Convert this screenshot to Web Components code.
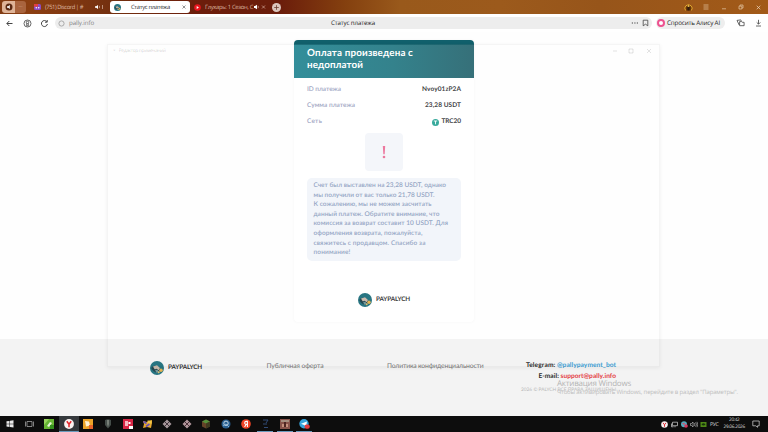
<!DOCTYPE html>
<html lang="ru">
<head>
<meta charset="utf-8">
<title>Статус платежа</title>
<style>
  html, body { margin: 0; height: 100%; overflow: hidden; }
  body { font-family: "Open Sans", "Noto Sans", sans-serif; background: #fff; text-rendering: geometricPrecision; }
</style>
</head>
<body>
<desktop-screen></desktop-screen>

<script>
class DesktopScreen extends HTMLElement {
  connectedCallback () {
    this.attachShadow({ mode: 'open' }).innerHTML =
    /* html */`
    <style>
      :host { display: flex; flex-direction: column; width: 768px; height: 432px; position: relative; overflow: hidden; }
      main { flex: 1; min-height: 0; display: flex; flex-direction: column; align-items: center; background: #fefefe; }
      payment-card { margin-top: 8px; }
      page-footer { margin-top: auto; align-self: stretch; }
      ghost-window { position: absolute; left: 107px; top: 44px; }
      activation-note { position: absolute; left: 557px; top: 377px; }
    </style>
    <tab-strip></tab-strip>
    <address-bar></address-bar>
    <main>
      <payment-card>
        <span slot="title"><fit-text w="106">Оплата произведена с</fit-text><br><fit-text w="56">недоплатой</fit-text></span>
        <payment-row><fit-text slot="label" w="34">ID платежа</fit-text><fit-text w="39">Nvoy01zP2A</fit-text></payment-row>
        <payment-row><fit-text slot="label" w="48">Сумма платежа</fit-text><fit-text w="36">23,28 USDT</fit-text></payment-row>
        <payment-row coin><fit-text slot="label" w="15">Сеть</fit-text><fit-text w="19.5">TRC20</fit-text></payment-row>
      </payment-card>
      <page-footer></page-footer>
    </main>
    <task-bar></task-bar>
    <ghost-window></ghost-window>
    <activation-note></activation-note>
    `
  }
}

class TabStrip extends HTMLElement {
  connectedCallback () {
    this.attachShadow({ mode: 'open' }).innerHTML =
    /* html */`
    <style>
      :host { display: flex; align-items: center; box-sizing: border-box; height: 14px; padding-left: 2px; color: #dfb9a2; font-size: 5.8px; line-height: 12px;
        background: linear-gradient(90deg, #803a12 0, #8c3f12 30px, #74300f 110px, #6c1d0b 200px, #6b1d0b 280px, #84400f 345px, #99591b 400px, #9c5a1c 500px, #97551a 600px, #a25a18 768px); }
      .pin { display: flex; align-items: center; justify-content: center; width: 13px; height: 12px; border-radius: 3px 0 0 3px; background: #dfb498; }
      .more { width: 11px; height: 12px; border-radius: 0 3px 3px 0; background: #a9643e; text-align: center; font-size: 5px; }
      .tab { display: flex; align-items: center; height: 12px; }
      .one { width: 74px; margin-left: 8px; }
      .two { box-sizing: border-box; width: 80px; margin-left: 2px; padding: 0 4px; background: #fff; border-radius: 3px; color: #222; }
      .three { width: 77px; margin-left: 4px; }
      .plus { width: 9px; height: 9px; border-radius: 50%; background: #dcc6bd; margin-left: 1px; }
      svg { display: block; flex: none; }
      .controls { display: flex; align-items: center; margin-left: auto; padding-right: 7px; }
    </style>
    <div class="pin"><svg width="8" height="8" viewBox="0 0 8 8"><circle cx="4" cy="4" r="3.5" fill="#5b2a13"/><path d="M2 3.2h1.2L4.8 2v4L3.2 4.8H2z" fill="#fff"/></svg></div>
    <div class="more">···</div>
    <div class="tab one">
      <svg width="7" height="8" viewBox="0 0 7 8"><rect y="1" width="7" height="6" rx="1.5" fill="#8a4cc4"/><path d="M0 1h4v2.6H0z" fill="#e3403f"/><circle cx="2.3" cy="4.7" r=".8" fill="#fff"/><circle cx="4.7" cy="4.7" r=".8" fill="#fff"/></svg>
      <fit-text w="38" style="margin-left:4px">(751) Discord | #</fit-text>
      <svg style="margin-left:12px" width="11" height="6" viewBox="0 0 11 6"><path d="M0 2.2h1.2L3 1v4L1.2 3.8H0z" fill="#fff"/><path d="M4.2 1.8q.8 1.2 0 2.4M7.5 1v4" stroke="#e9cdbd" stroke-width=".6" fill="none"/></svg>
    </div>
    <div class="tab two">
      <pally-logo style="--size:7px"></pally-logo>
      <fit-text w="39" style="margin-left:10px">Статус платежа</fit-text>
      <svg style="margin-left:auto" width="4" height="4" viewBox="0 0 4 4"><path d="M.5.5l3 3m0-3l-3 3" stroke="#666" stroke-width=".7"/></svg>
    </div>
    <div class="tab three">
      <svg width="7" height="7" viewBox="0 0 7 7"><circle cx="3.5" cy="3.5" r="3.3" fill="#e8141d"/><path d="M2.7 2l2.2 1.5L2.7 5z" fill="#fff"/></svg>
      <fit-text w="48" style="margin-left:4px">Глухарь: 1 Сезон, С</fit-text>
      <svg style="margin-left:1px" width="14" height="6" viewBox="0 0 14 6"><path d="M0 2h1L3 .8v4.4L1 4H0z" fill="#fff"/><path d="M4 1.8q.8 1.2 0 2.4M8 1.5l3 3m0-3l-3 3" stroke="#e6c1b4" stroke-width=".6" fill="none"/></svg>
    </div>
    <div class="plus"><svg width="9" height="9" viewBox="0 0 9 9"><path d="M4.5 2.2v4.6M2.2 4.5h4.6" stroke="#6b3d2e" stroke-width=".8"/></svg></div>
    <div class="controls">
      <svg width="9" height="10" viewBox="0 0 9 10"><path d="M1.6 8.5A3.6 3.6 0 1 1 7.4 8.5" fill="#6a3506" stroke="#e7ad33" stroke-width="1"/><path d="M3.4 3.3h2.2v5.2H3.4z" fill="#311b0d"/><circle cx="4.5" cy="4" r="1.1" fill="#f1bd45"/></svg>
      <svg style="margin-left:10px" width="6" height="6" viewBox="0 0 6 6"><path d="M.5 1h5M.5 3h5M.5 5h5" stroke="#e5c8a6" stroke-width=".7"/></svg>
      <svg style="margin-left:12px" width="6" height="6" viewBox="0 0 6 6"><path d="M1 4.8h4" stroke="#e5c8a6" stroke-width=".7"/></svg>
      <svg style="margin-left:11px" width="6" height="6" viewBox="0 0 6 6"><path d="M1 2.2h2.8V5H1zM2 2V1h3v3H4" stroke="#e5c8a6" stroke-width=".7" fill="none"/></svg>
      <svg style="margin-left:12px" width="5" height="5" viewBox="0 0 5 5"><path d="M.7.7l3.6 3.6m0-3.6L.7 4.3" stroke="#f0d9bf" stroke-width=".7"/></svg>
    </div>
    `
  }
}

class AddressBar extends HTMLElement {
  connectedCallback () {
    this.attachShadow({ mode: 'open' }).innerHTML =
    /* html */`
    <style>
      :host { display: flex; align-items: center; box-sizing: border-box; height: 18px; padding: 0 5px 0 5px; background: #fff; color: #222; font-size: 6.2px; line-height: 12px; }
      svg { display: block; flex: none; fill: none; stroke: #444; stroke-width: .8; }
      .field { display: flex; align-items: center; box-sizing: border-box; width: 597px; height: 12px; margin-left: 5px; padding: 0 3px; border-radius: 6px; background: #ededed; }
      .url { color: #858585; margin-left: 4px; }
      .alice { display: flex; align-items: center; box-sizing: border-box; width: 69px; height: 12px; margin-left: 4px; padding-left: 1px; background: #eee; border-radius: 6px; font-size: 6.3px; font-weight: 500; }
      .ring { box-sizing: border-box; width: 8px; height: 8px; border: 2.2px solid #ed5290; border-radius: 50%; background: #fff; margin-right: 2px; }
    </style>
    <svg width="9" height="9" viewBox="0 0 9 9"><path d="M7.5 4.5H2M4.3 2L1.8 4.5 4.3 7" stroke-width="1"/></svg>
    <svg style="margin-left:9px" width="9" height="9" viewBox="0 0 9 9"><circle cx="4.5" cy="4.5" r="3.5"/><circle cx="4.5" cy="3.4" r="1.2"/><path d="M3.7 4.3v2.5h1.6V4.3" /></svg>
    <svg style="margin-left:8px" width="9" height="9" viewBox="0 0 9 9"><path d="M6.8 2.7A3 3 0 1 0 7.4 5M7.2 1v2.2H5" stroke-width="1"/></svg>
    <div class="field" style="margin-left:6px">
      <svg width="7" height="7" viewBox="0 0 7 7" style="stroke:#aaa"><circle cx="3.5" cy="3.5" r="2.6" stroke-width="1"/></svg>
      <fit-text class="url" w="25">pally.info</fit-text>
      <fit-text w="44" style="margin-left:237px">Статус платежа</fit-text>
      <svg style="margin-left:auto" width="8" height="8" viewBox="0 0 8 8"><path d="M.8 4h1.2m1.3 0h1.2m1.3 0H7" stroke-width="1"/></svg>
      <svg style="margin:0 0 0 3px" width="7" height="8" viewBox="0 0 7 8"><path d="M1.2 1.2h4.6v5.6L3.5 5.2 1.2 6.8z"/></svg>
    </div>
    <div class="alice"><div class="ring"></div><fit-text w="53">Спросить Алису AI</fit-text></div>
    <svg style="margin-left:auto" width="9" height="8" viewBox="0 0 9 8"><path d="M3.2 6L1 1.4l3.8-.5 .5 1M3.6 2.6h2.2l.5.7h1.8v3.4H3.6z"/></svg>
    <svg style="margin-left:10px; margin-right:1px" width="7" height="8" viewBox="0 0 7 8"><path d="M3.5 .8v4.2M1.7 3.4l1.8 1.8 1.8-1.8M1 7h5"/></svg>
    `
  }
}

class PaymentCard extends HTMLElement {
  connectedCallback () {
    this.attachShadow({ mode: 'open' }).innerHTML =
    /* html */`
    <style>
      :host { display: block; box-sizing: border-box; width: 180px; height: 282px; background: #fff; border-radius: 4px; box-shadow: 0 0 3px rgba(0,0,0,.045); }
      header { box-sizing: border-box; height: 38px; padding: 6.5px 13px 0; border-radius: 4px 4px 0 0; color: #fff; font: 700 9.8px/12.7px Lato, "Open Sans", sans-serif;
        background: linear-gradient(#11606c, #11606c) top/100% 4.6px no-repeat, linear-gradient(90deg, #338e9a, #34828c 55%, #367079); }
      .rows { padding: 4px 13px 0; }
      .mark { display: flex; align-items: center; justify-content: center; width: 38px; height: 38px; margin: 3px auto 7px; background: #f4f6fa; border-radius: 4px; }
      .notice { box-sizing: border-box; width: 154px; height: 83px; margin: 0 auto; padding: 3px 6.5px; border-radius: 5px; background: #f2f5fa; color: #94a5c4; font: 600 6.5px/9.6px Lato, "Open Sans", sans-serif; }
      .notice fit-text { display: block; }
      .brand { display: flex; align-items: center; justify-content: center; margin-top: 32px; color: #3c3c3c; font: 700 6.3px/14px Lato, sans-serif; gap: 4px; }
    </style>
    <header><slot name="title"></slot></header>
    <div class="rows"><slot></slot></div>
    <div class="mark"><svg width="6" height="14" viewBox="0 0 6 14"><path d="M1.8 1h2.4L3.7 9.3H2.3z" fill="#ec799f"/><circle cx="3" cy="12" r="1.3" fill="#ec799f"/></svg></div>
    <div class="notice">
      <fit-text w="132.5">Счет был выставлен на 23,28 USDT, однако</fit-text>
      <fit-text w="121">мы получили от вас только 21,78 USDT.</fit-text>
      <fit-text w="118">К сожалению, мы не можем засчитать</fit-text>
      <fit-text w="126">данный платеж. Обратите внимание, что</fit-text>
      <fit-text w="134.5">комиссия за возврат составит 10 USDT. Для</fit-text>
      <fit-text w="109">оформления возврата, пожалуйста,</fit-text>
      <fit-text w="112">свяжитесь с продавцом. Спасибо за</fit-text>
      <fit-text w="37">понимание!</fit-text>
    </div>
    <div class="brand"><pally-logo></pally-logo><fit-text w="34">PAYPALYCH</fit-text></div>
    `
  }
}

class PaymentRow extends HTMLElement {
  connectedCallback () {
    const coin = this.hasAttribute('coin')
      ? '<svg width="7" height="7" viewBox="0 0 7 7"><circle cx="3.5" cy="3.5" r="3.5" fill="#38aa9c"/><path d="M1.8 2h3.4M3.5 2v3.3" stroke="#fff" stroke-width=".9"/></svg>'
      : ''
    this.attachShadow({ mode: 'open' }).innerHTML =
    /* html */`
    <style>
      :host { display: flex; align-items: center; justify-content: space-between; height: 16px; font: 600 6.5px/15.5px Lato, "Open Sans", sans-serif; }
      .label { color: #a0a6c3; }
      .value { display: flex; align-items: center; gap: 2.5px; color: #454548; font-weight: 700; }
    </style>
    <span class="label"><slot name="label"></slot></span>
    <span class="value">${coin}<slot></slot></span>
    `
  }
}

class PallyLogo extends HTMLElement {
  connectedCallback () {
    this.attachShadow({ mode: 'open' }).innerHTML =
    /* html */`
    <style>
      :host { display: block; flex: none; width: var(--size, 14px); height: var(--size, 14px); }
      svg { display: block; width: 100%; height: 100%; }
    </style>
    <svg viewBox="0 0 14 14">
      <circle cx="7" cy="7" r="7" fill="#287582"/>
      <path d="M1.2 7q2-3 6-2.2l3.3 3.8-2.8 3.5Q3 11 1.2 7z" fill="#254750"/>
      <path d="M3 5.6l4-1.3 3 2.7-1.4 2.2-2-1.5-2 .5z" fill="#ccbcae"/>
      <path d="M5 8.7l2.7.4.9 2.2-2.3.5z" fill="#70979b"/>
      <circle cx="11" cy="9.3" r="1.7" fill="#e5b452"/>
      <circle cx="8.7" cy="11.2" r="1" fill="#d9c173"/>
    </svg>
    `
  }
}

class PageFooter extends HTMLElement {
  connectedCallback () {
    this.attachShadow({ mode: 'open' }).innerHTML =
    /* html */`
    <style>
      :host { display: flex; align-items: flex-start; box-sizing: border-box; height: 77px; padding: 21px 0 0 150px; background: #f3f3f3; font: 400 6.8px/12px Lato, "Open Sans", sans-serif; color: #777; }
      .brand { display: flex; align-items: center; gap: 4px; margin-top: 1px; color: #333; font: 700 6.3px/14px Lato, sans-serif; }
      .terms { margin-left: 64.5px; }
      .policy { margin-left: 63.5px; }
      .contacts { display: flex; flex-direction: column; align-items: flex-end; width: 132.5px; color: #292929; font: 700 6.6px/11px Lato, "Open Sans", sans-serif; }
      .tg { color: #3b9dd2; }
      .mail { color: #e33c43; }
      .rights { color: #b9b9b9; font: 400 4.8px/9px Lato, sans-serif; margin-top: 4px; }
    </style>
    <div class="brand"><pally-logo></pally-logo><fit-text w="34">PAYPALYCH</fit-text></div>
    <fit-text class="terms" w="57">Публичная оферта</fit-text>
    <fit-text class="policy" w="96.5">Политика конфиденциальности</fit-text>
    <div class="contacts">
      <div><fit-text w="29.5">Telegram:</fit-text> <fit-text class="tg" w="59">@pallypayment_bot</fit-text></div>
      <div><fit-text w="20.5">E-mail:</fit-text> <fit-text class="mail" w="55.5">support@pally.info</fit-text></div>
      <fit-text class="rights" w="95">2026 © PALYCH ВСЕ ПРАВА ЗАЩИЩЕНЫ</fit-text>
    </div>
    `
  }
}

// faded leftover of a window that is opening over the page
class GhostWindow extends HTMLElement {
  connectedCallback () {
    this.attachShadow({ mode: 'open' }).innerHTML =
    /* html */`
    <style>
      :host { display: block; box-sizing: border-box; width: 553px; height: 323px; border: 1px solid rgba(0,0,0,.035); box-shadow: 0 1px 4px rgba(0,0,0,.06); }
      .bar { display: flex; align-items: center; height: 12px; padding: 0 6px 0 5px; color: rgba(0,0,0,.2); font-size: 4.8px; line-height: 12px; }
      svg { display: block; margin-left: auto; }
    </style>
    <div class="bar">
      <span>×</span><fit-text w="47" style="margin-left:3px">Редактор примечаний</fit-text>
      <svg width="41" height="6" viewBox="0 0 41 6"><path d="M1 3h4M17 1h4v4h-4zM35 1l4 4m0-4l-4 4" stroke="#000" stroke-opacity=".16" stroke-width=".7" fill="none"/></svg>
    </div>
    `
  }
}

class ActivationNote extends HTMLElement {
  connectedCallback () {
    this.attachShadow({ mode: 'open' }).innerHTML =
    /* html */`
    <style>
      :host { display: flex; flex-direction: column; color: #b4b4b4; font: 400 8px/13px "Open Sans", sans-serif; }
      .small { color: #bdbdbd; font-size: 6px; line-height: 5px; }
    </style>
    <div><fit-text w="74">Активация Windows</fit-text></div>
    <div class="small"><fit-text w="181">Чтобы активировать Windows, перейдите в раздел "Параметры".</fit-text></div>
    `
  }
}

class TaskBar extends HTMLElement {
  connectedCallback () {
    this.attachShadow({ mode: 'open' }).innerHTML =
    /* html */`
    <style>
      :host { display: flex; align-items: center; height: 16px; background: #0d0d0d; color: #ddd; }
      .apps { display: flex; }
      .apps div { display: flex; align-items: center; justify-content: center; box-sizing: border-box; width: 19.65px; height: 16px; }
      .apps .open { background: linear-gradient(#6a9bbd, #6a9bbd) bottom/16px 1px no-repeat; }
      .apps .active { background-color: #35393c; background-size: 100% 1px; }
      svg { display: block; flex: none; }
      .tray { display: flex; align-items: center; margin-left: auto; padding-right: 8px; font-size: 5.2px; }
      .clock { display: flex; flex-direction: column; align-items: center; margin-left: 5px; font-size: 4.7px; line-height: 7px; }
    </style>
    <div class="apps">
      <div><svg width="8" height="8" viewBox="0 0 8 8"><path d="M.5 1.3l3-.4v2.8h-3zM4 .8L7.5.3v3.4H4zM.5 4.2h3V7l-3-.4zM4 4.2h3.5v3.4L4 7.1z" fill="#e8e8e8"/></svg></div>
      <div><svg width="9" height="8" viewBox="0 0 9 8"><path d="M2 1.5h5v5H2zM.5 1.5v5M8.5 1.5v5" stroke="#b5b5b5" stroke-width=".7" fill="none"/></svg></div>
      <div><svg width="10" height="10" viewBox="0 0 10 10"><rect width="10" height="10" fill="#66b534"/><path d="M0 0h5L0 6z" fill="#9ad45d"/><path d="M3 7l3-4 2 1-3 4z" fill="#e7f5d7"/><path d="M6 6h4v4H6z" fill="#35911e"/></svg></div>
      <div class="open active"><svg width="10" height="10" viewBox="0 0 10 10"><circle cx="5" cy="5" r="4.9" fill="#fbf3f2"/><path d="M2.8 2.2L5 5.2l2.2-3M5 5v3.2" stroke="#e2262b" stroke-width="1.5" fill="none"/></svg></div>
      <div><svg width="10" height="10" viewBox="0 0 10 10"><rect width="10" height="10" fill="#eca328"/><path d="M2 2l4 .5 1 4-4 1z" fill="#fff1d0"/><path d="M6 6h4v4H6z" fill="#e66329"/></svg></div>
      <div><svg width="8" height="10" viewBox="0 0 8 10"><path d="M1 1q3-1.5 6 0v5L4 9.5 1 6z" fill="#454d49"/><path d="M3 1v4l1 3 1-3V1z" fill="#788078"/></svg></div>
      <div><svg width="10" height="10" viewBox="0 0 10 10"><rect width="10" height="10" fill="#d72645"/><path d="M2 2h3v5H2z" fill="#f6b7c0"/><path d="M5.5 3h2v2h-2zM6 7h4v3H6z" fill="#fff"/></svg></div>
      <div><svg width="11" height="10" viewBox="0 0 11 10"><path d="M1 2l4 1 5-2v3L9 9 5 8 1 9l1-4z" fill="#e6a82e"/><path d="M5.5 1.5h4v3h-4z" fill="#f0c648"/><path d="M1.5 2.5l3 2M7.5 5L4 7.5" stroke="#6b52b5" stroke-width="1.7"/></svg></div>
      <div><svg width="10" height="10" viewBox="0 0 10 10"><path d="M5 .5L9.5 5 5 9.5.5 5z" fill="#a6979b"/><path d="M3 3l4 4m0-4L3 7" stroke="#382b32" stroke-width=".9"/></svg></div>
      <div><svg width="10" height="10" viewBox="0 0 10 10"><path d="M5 .5L9.5 5 5 9.5.5 5z" fill="#b1979c"/><path d="M3 3l4 4m0-4L3 7" stroke="#42282f" stroke-width=".9"/></svg></div>
      <div><svg width="10" height="10" viewBox="0 0 10 10"><path d="M5 .5l4 2v5l-4 2-4-2v-5z" fill="#654328"/><path d="M5 .5l4 2-4 2-4-2z" fill="#56903a"/><path d="M5 4.5l4-2v5l-4 2z" fill="#3f3b20"/></svg></div>
      <div><svg width="10" height="10" viewBox="0 0 10 10"><circle cx="5" cy="5" r="4.5" fill="#285f90"/><circle cx="5" cy="4.3" r="2.2" fill="none" stroke="#c2d6e5"/><path d="M2 7l3-2 3 3" stroke="#87b2d5" fill="none"/></svg></div>
      <div><svg width="10" height="10" viewBox="0 0 10 10"><circle cx="5" cy="5" r="4.8" fill="#f04325"/><path d="M6.4 8V2.4H5.2a1.5 1.5 0 0 0 0 3h1.2M5 5.5L3.6 8" stroke="#fff" stroke-width="1.1" fill="none"/></svg></div>
      <div class="open"><svg width="9" height="10" viewBox="0 0 9 10"><path d="M2 1h5L5 4M2 5h4M3 8.5h4" stroke="#304a75" stroke-width="1" fill="none"/></svg></div>
      <div class="open"><svg width="10" height="10" viewBox="0 0 10 10"><rect width="10" height="10" fill="#88534a"/><path d="M1 1h8v2H1z" fill="#a58d7e"/><path d="M2 5h2v3H2zM6 5h2v3H6z" fill="#c4907d"/><path d="M4 3h2v5H4z" fill="#4d2521"/></svg></div>
      <div class="open"><svg width="11" height="10" viewBox="0 0 11 10"><circle cx="5" cy="4.8" r="4.7" fill="#37a5dd"/><path d="M2 4.7l6-2.3-1 5-2-1.3z" fill="#fff"/><rect x="5.5" y="5.5" width="5.3" height="4.3" rx="2" fill="#e53c3e"/></svg></div>
    </div>
    <div class="tray">
      <svg width="7" height="7" viewBox="0 0 7 7"><circle cx="3.5" cy="3.5" r="3.3" fill="#f5eeee"/><path d="M2 1.8l1.5 2 1.5-2M3.5 3.8v2" stroke="#df2830" fill="none"/></svg>
      <svg style="margin-left:3px" width="7" height="7" viewBox="0 0 7 7"><path d="M1.5 1.2h5v3.5h-5zM4 5v1.3M.5 2.5v3.3h2" stroke="#d5d5d5" stroke-width=".7" fill="none"/></svg>
      <svg style="margin-left:3px" width="7" height="7" viewBox="0 0 7 7"><circle cx="3" cy="3.3" r="3" fill="#55aabe"/><path d="M1 2h3l-1 2z" fill="#d84e6a"/><circle cx="5" cy="5" r="1.8" fill="#d7395b"/></svg>
      <svg style="margin-left:2px" width="8" height="7" viewBox="0 0 8 7"><path d="M.5 2.5h1L3 1v5L1.5 4.5h-1zM4.2 2q1 1.5 0 3M5.6 1.3q1.6 2.2 0 4.4M7 .8q1.4 2.7 0 5.4" stroke="#ccc" stroke-width=".6" fill="none"/></svg>
      <svg style="margin-left:2px" width="7" height="7" viewBox="0 0 7 7"><path d="M.5 1h6v5h-6z" fill="#4f8717"/><path d="M1.5 3.6q2-2.6 4 0-2 2-4 0z" fill="#15320a"/></svg>
      <fit-text w="8.5" style="margin-left:3px">РУС</fit-text>
      <div class="clock"><fit-text w="10.5">20:42</fit-text><fit-text w="21.5">29.06.2026</fit-text></div>
      <svg style="margin-left:7px" width="8" height="8" viewBox="0 0 8 8"><path d="M.8 1h6.4v4.8H5.5v1.5L3.8 5.8h-3z" stroke="#ddd" stroke-width=".7" fill="none"/></svg>
    </div>
    `
  }
}

// stretches or tightens its letters to the width given in "w"
class FitText extends HTMLElement {
  connectedCallback () {
    this.attachShadow({ mode: 'open' }).innerHTML =
    /* html */`
    <style>
      :host { display: inline-block; white-space: nowrap; flex: none; }
      span { display: inline-block; }
    </style>
    <span><slot></slot></span>
    `
    const width = Number(this.getAttribute('w'))
    const span = this.shadowRoot.querySelector('span')
    const space = (width - span.getBoundingClientRect().width) / this.textContent.length
    span.style.letterSpacing = space.toFixed(3) + 'px'
    this.style.width = width + 'px'
  }
}

customElements.define('desktop-screen', DesktopScreen)
customElements.define('tab-strip', TabStrip)
customElements.define('address-bar', AddressBar)
customElements.define('payment-card', PaymentCard)
customElements.define('payment-row', PaymentRow)
customElements.define('page-footer', PageFooter)
customElements.define('ghost-window', GhostWindow)
customElements.define('activation-note', ActivationNote)
customElements.define('task-bar', TaskBar)
customElements.define('pally-logo', PallyLogo)
customElements.define('fit-text', FitText)
</script>
</body>
</html>
